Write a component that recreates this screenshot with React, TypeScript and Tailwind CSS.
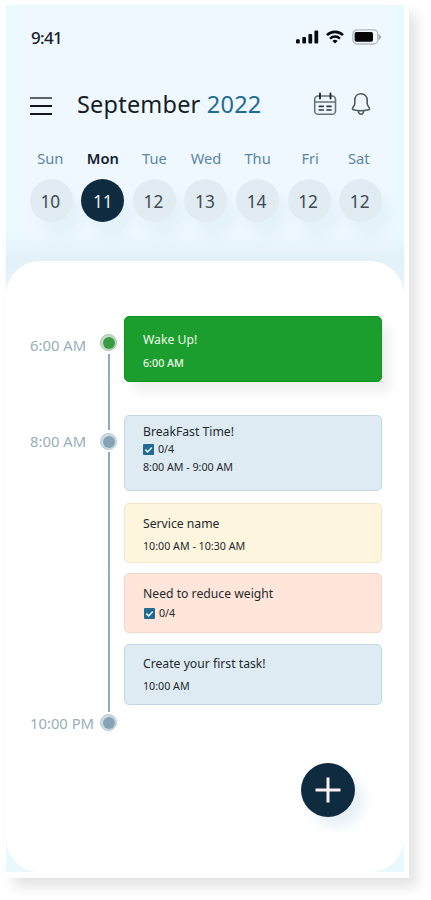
const days = [
  { name: "Sun", date: 10, shift: "-left-px" },
  { name: "Mon", date: 11, shift: "left-0", active: true },
  { name: "Tue", date: 12, shift: "left-0" },
  { name: "Wed", date: 13, shift: "left-0" },
  { name: "Thu", date: 14, shift: "left-0" },
  { name: "Fri", date: 12, shift: "left-px" },
  { name: "Sat", date: 12, shift: "-left-[2px]" },
];

function StatusBar() {
  return (
    <div className="flex h-[26px] items-center justify-between pl-[25px] pr-[22px]">
      <span className="text-[17px] font-medium leading-[26px] tracking-[-0.7px] text-[#1c2328]">9:41</span>
      <div className="-mt-[2px] flex items-center">
        <svg width="23" height="14" viewBox="0 0 23 14" fill="#080b0e">
          <rect x="0" y="9.3" width="3.8" height="4.2" rx="1.2" />
          <rect x="6.3" y="7" width="3.7" height="6.5" rx="1" />
          <rect x="12.4" y="4" width="3.8" height="9.5" rx="1" />
          <rect x="18.4" y="0.5" width="3.8" height="13" rx="1" />
        </svg>
        <svg className="ml-[7px]" width="18" height="14" viewBox="0 0 18 14" fill="none" stroke="#080b0e">
          <path d="M1 5.2C5.4.7 12.6.7 17 5.2" strokeWidth="2.6" />
          <path d="M4 8.6c2.8-2.8 7.2-2.8 10 0" strokeWidth="2.3" />
          <path d="M6.4 10.9c1.5-1.5 3.7-1.5 5.2 0L9 13.5z" fill="#080b0e" stroke="none" />
        </svg>
        <svg className="ml-[8px]" width="30" height="16" viewBox="0 0 30 16" fill="none">
          <rect x="0.8" y="0.8" width="25" height="14.2" rx="4.2" stroke="#b4bbbd" strokeWidth="1.3" />
          <rect x="2.6" y="3" width="18.4" height="9.8" rx="1.8" fill="#050607" />
          <path d="M26.5 4.5L29.5 8l-3 3.5z" fill="#a2aaad" />
        </svg>
      </div>
    </div>
  );
}

function CalendarIcon() {
  return (
    <svg width="24" height="24" viewBox="0 0 24 24" fill="none" stroke="#66727a" strokeWidth="1.6" strokeLinecap="round">
      <rect x="1.7" y="4" width="20.8" height="18.3" rx="3.4" />
      <path d="M2 10h20.2" strokeWidth="1.4" />
      <path d="M7 1.5v5M17.500 1.500v5" stroke="#17232c" strokeWidth="1.8" />
      <path d="M6.3 14.3h4M14 14.3h4M6.3 18h4M14 18h4" stroke="#2b3943" strokeWidth="1.7" />
    </svg>
  );
}

function BellIcon() {
  return (
    <svg width="20" height="24" viewBox="0 0 20 24" fill="none" stroke="#4c5961" strokeWidth="1.6" strokeLinecap="round" strokeLinejoin="round">
      <path d="M10 1.8c-4 0-6.2 2.9-6.2 6.6v3.2c0 1.5-.8 2.3-1.7 3.5-1.1 1.5-.7 2.5 1 2.9 4.6 1 9.200 1 13.800 0 1.700-.4 2.100-1.400 1-2.900-.9-1.200-1.700-2-1.700-3.500V8.400c0-3.700-2.200-6.600-6.200-6.600z" />
      <path d="M7.3 19c.3 2 1.3 3.2 2.7 3.2s2.4-1.2 2.7-3.2" />
    </svg>
  );
}

function Header() {
  return (
    <div className="flex h-[30px] items-center pl-[24px]">
      <div className="flex w-[22px] flex-col gap-[6px] pt-[4px]">
        <span className="h-[2px] bg-[#5c6468]" />
        <span className="h-[2px] bg-[#11171c]" />
        <span className="h-[2px] bg-[#11171c]" />
      </div>
      <h1 className="ml-[25px] whitespace-nowrap text-[23.5px] leading-[30px] tracking-[0.2px] text-[#141d24]">
        September <span className="text-[#226b94]">2022</span>
      </h1>
      <div className="ml-auto flex items-center pr-[33px]">
        <CalendarIcon />
        <span className="w-[14px]" />
        <BellIcon />
      </div>
    </div>
  );
}

function WeekStrip() {
  return (
    <div className="ml-[19.5px] grid w-[361px] grid-cols-7">
      {days.map((day) => (
        <div key={day.name} className="flex flex-col items-center">
          <span
            className={`relative text-[14.7px] leading-[20px] ${day.shift} ${
              day.active ? "font-semibold text-[#10202c]" : "text-[#5c86a3]"
            }`}
          >
            {day.name}
          </span>
          <span
            className={`mt-[11px] flex size-[43px] items-center justify-center rounded-full pt-[2px] text-[17.3px] shadow-[9px_13px_14px_rgba(174,205,222,0.17)] ${
              day.active ? "bg-[#0f2b40] text-[#e6edf2]" : "bg-[#e0ebf2] pr-[2px] text-[#3f4a52]"
            }`}
          >
            {day.date}
          </span>
        </div>
      ))}
    </div>
  );
}

function Dot({ green = false }: { green?: boolean }) {
  return (
    <span
      className={`flex size-[17px] shrink-0 items-center justify-center rounded-full border ${
        green ? "border-[#a3c4aa] bg-[#c5dec8]" : "border-[#b6c7d2] bg-[#cfdce5]"
      }`}
    >
      <span className={`size-[12px] rounded-full ${green ? "bg-[#3c9a42]" : "bg-[#86a2b5]"}`} />
    </span>
  );
}

function Rail() {
  return (
    <div className="flex pt-[73px]">
      <div className="flex w-[75px] flex-col whitespace-nowrap pl-[24px] text-[14.8px] leading-[20px] text-[#9aaeba]">
        <span className="mt-px">6:00 AM</span>
        <span className="mt-[76px]">8:00 AM</span>
        <span className="mt-[262px]">10:00 PM</span>
      </div>
      <div className="ml-[19px] flex flex-col items-center">
        <Dot green />
        <span className="my-[3px] h-[76px] w-[2px] bg-[#92aabd]" />
        <Dot />
        <span className="my-[2px] h-[260px] w-[2px] bg-[#92aabd]" />
        <Dot />
      </div>
    </div>
  );
}

function CheckCount() {
  return (
    <div className="flex items-center text-[10.7px] leading-[16px]">
      <svg className="mr-[4px]" width="11" height="11" viewBox="0 0 11 11">
        <rect width="11" height="11" rx="1" fill="#216b92" />
        <path d="M2.3 5.6l2.3 2.3 4.2-4.5" fill="none" stroke="#e8f3f8" strokeWidth="1.5" />
      </svg>
      0/4
    </div>
  );
}

const title = "text-[12.2px] leading-[18px]";
const time = "text-[10.7px] leading-[16px]";
const card = "rounded-[5px] border pl-[18px] whitespace-nowrap text-[#25292c]";

function Tasks() {
  return (
    <div className="ml-[7px] w-[258px] pt-[55px]">
      <div className="h-[66px] whitespace-nowrap rounded-[5px] border border-[#109420] bg-[#1c9e2f] pl-[18px] pt-[14px] text-[#effbe9] shadow-[9px_10px_10px_rgba(0,0,0,0.06)]">
        <p className={title}>Wake Up!</p>
        <p className={`mt-[6px] font-medium ${time}`}>6:00 AM</p>
      </div>
      <div className={`mt-[33px] h-[76px] border-[#c3d8e4] bg-[#deebf3] pt-[7px] ${card}`}>
        <p className={title}>BreakFast Time!</p>
        <CheckCount />
        <p className={`mt-[2px] ${time}`}>8:00 AM - 9:00 AM</p>
      </div>
      <div className={`mt-[12px] h-[60px] border-[#f1e7c6] bg-[#fdf5de] pt-[11px] ${card}`}>
        <p className={title}>Service name</p>
        <p className={`mt-[5px] ${time}`}>10:00 AM - 10:30 AM</p>
      </div>
      <div className={`mt-[10px] h-[60px] border-[#f2d8cc] bg-[#ffe5da] pt-[11px] ${card}`}>
        <p className={title}>Need to reduce weight</p>
        <div className="mt-[2px] pl-px">
          <CheckCount />
        </div>
      </div>
      <div className={`mt-[11px] h-[61px] border-[#c0d8e6] bg-[#deebf3] pt-[10px] ${card}`}>
        <p className={title}>Create your first task!</p>
        <p className={`mt-[5px] ${time}`}>10:00 AM</p>
      </div>
    </div>
  );
}

export default function App() {
  return (
    <div className="h-[900px] w-[431px] overflow-hidden bg-white pl-[5px] pt-[5px] font-['Noto_Sans',sans-serif]">
      <div className="h-[873px] w-[404px] bg-white pl-px pr-[5px] shadow-[8px_9px_12px_rgba(0,0,0,0.11)]">
        <div className="flex h-[867px] w-[398px] flex-col bg-[linear-gradient(90deg,#e9fbff_0px,#eff8ff_24px,#eff8ff_375px,#e9faff_398px)]">
          <div className="h-[256px] shrink-0 bg-[linear-gradient(180deg,rgba(226,241,248,0)_225px,#e2f1f8_256px)] pt-[20px]">
            <StatusBar />
            <div className="h-[38px]" />
            <Header />
            <div className="h-[29px]" />
            <WeekStrip />
          </div>
          <div className="flex-1 bg-[linear-gradient(180deg,#e2f1f8_0px,#e9f8fd_40px)]">
            <main className="relative h-[611px] rounded-[34px] bg-white">
              <div className="flex">
                <Rail />
                <Tasks />
              </div>
              <button
                aria-label="Add task"
                className="absolute left-[295px] top-[502px] flex size-[54px] items-center justify-center rounded-full bg-[#0f2b40] shadow-[9px_10px_12px_rgba(160,200,225,0.25)]"
              >
                <svg width="26" height="26" viewBox="0 0 26 26" stroke="#fdf0f2" strokeWidth="3">
                  <path d="M13 .5v25M.5 13h25" />
                </svg>
              </button>
            </main>
          </div>
        </div>
      </div>
    </div>
  );
}
